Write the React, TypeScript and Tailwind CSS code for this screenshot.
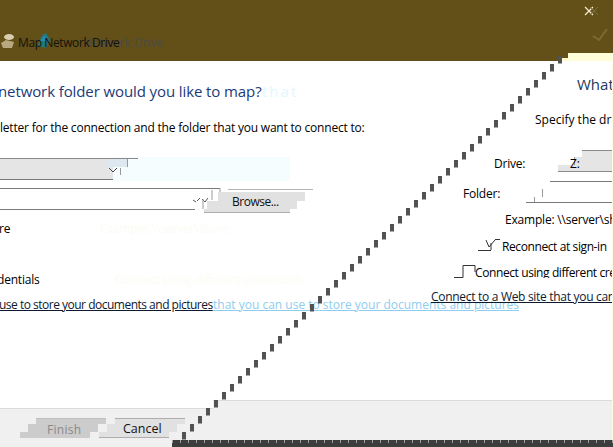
const font = "font-['Open_Sans','Noto_Sans',sans-serif]";

function Band({ cls }: { cls: string }) {
  return <div className={cls} />;
}

function Dashes() {
  const items = Array.from({ length: 48 }, (_, k) => k);
  return (
    <svg className="absolute left-0 top-0 pointer-events-none" width="613" height="447">
      {items.map((k) => (
        <rect key={k} x={182 + 8 * k} y={432 - 8 * k} width="4" height="7.5" fill="#525252" />
      ))}
    </svg>
  );
}

function Header() {
  return (
    <header className="relative h-[61px] shrink-0 bg-[#634f18] overflow-hidden">
      <svg className="absolute left-0 top-[32px]" width="60" height="18">
        <path d="M1 11 L6 8 L14 10 L12 16 L3 16 Z" fill="#b9a981" />
        <ellipse cx="9" cy="5" rx="5" ry="3" fill="#d9cdb0" />
        <path d="M38 14 Q40 3 46 1 L50 8 L46 16 Z" fill="#1d7a7a" />
        <path d="M40 9 L45 3 L47 9 Z" fill="#2f86b8" />
      </svg>
      <span className="absolute left-[83px] top-[34px] text-[12px] text-[#4a4c48]">Network Drive</span>
      <span className="absolute left-[18px] top-[34px] text-[12px] tracking-[-0.4px] text-[#15120a]">Map Network Drive</span>
      <svg className="absolute right-0 top-0" width="40" height="45">
        <path d="M12 7 L20 15 M20 7 L12 15" stroke="#f4eccf" strokeWidth="1.2" fill="none" />
        <path d="M17 7 L25 15 M25 7 L17 15" stroke="#7e6f45" strokeWidth="1" fill="none" />
        <path d="M20 36 L26 40 L34 29" stroke="#7a6a38" strokeWidth="2" fill="none" />
      </svg>
      <div className="absolute right-0 top-[53px] h-[8px] w-[45px] bg-[#fffcd8]" />
      <div className="absolute right-[45px] top-[58px] h-[3px] w-[8px] bg-[#fff8c8]" />
    </header>
  );
}

function LeftLayer() {
  return (
    <div className="col-start-1 row-start-1 flex flex-col min-w-0 text-[12px] tracking-[-0.2px]">
      <div className="mt-[20px] h-[20px] ml-[-2px] flex items-center whitespace-nowrap text-[15px] tracking-[-0.1px] text-[#1c3a78]">
        <span className="w-[264px] shrink-0">network folder would you like to map?</span>
        <span className="text-[#e2f8ff] tracking-[2px]">that</span>
      </div>
      <div className="mt-[19px] h-[16px] flex items-center whitespace-nowrap text-black">
        letter for the connection and the folder that you want to connect to:
      </div>
      <div className="mt-[22px] w-[290px] h-[24px] relative flex flex-col">
        <div className="h-[24px] w-[177px] ml-[113px] bg-[#f5fdff] absolute top-[-1px]" />
        <Band cls="relative h-[9px] w-[128px] bg-[linear-gradient(90deg,#e5e5e5_108px,#dde8f1_108px)] border-t border-[#8a8a8a]" />
        <Band cls="relative h-[13px] w-[113px] bg-[#e5e5e5] border-b border-[#7a7a7a]" />
        <svg className="absolute left-[108px] top-[0px]" width="30" height="24">
          <path d="M20 0.5 H30" stroke="#8a8a8a" fill="none" />
          <path d="M1 10 L5 14 L9 10" stroke="#444" fill="none" />
          <path d="M12.5 10 V17 M19.5 1 V9" stroke="#999" fill="none" />
        </svg>
      </div>
      <div className="mt-[6px] h-[24px] w-[320px] relative">
        <Band cls="h-[22px] w-[220px] bg-white border-t border-[#7a7a7a] border-b-0" />
        <Band cls="absolute left-0 top-[21px] w-[195px] h-[1px] bg-[#7a7a7a]" />
        <svg className="absolute left-[190px] top-[0px]" width="40" height="24">
          <path d="M3 12 L6 14 M7 13 L10 10 M12 11 L15 14 L18 10" stroke="#555" fill="none" />
          <path d="M13 11 V21 M22 2 V12 M30 0 V8" stroke="#999" fill="none" />
        </svg>
        <div className="absolute left-[204px] top-[1px] flex flex-col w-[110px]">
          <Band cls="ml-[24px] w-[85px] h-[1px] bg-[#b5b5b5]" />
          <Band cls="ml-[14px] w-[87px] h-[9px] mt-[2px] bg-[#e1e1e1]" />
          <Band cls="ml-[3px] w-[90px] h-[8px] bg-[#e1e1e1]" />
          <Band cls="ml-0 w-[86px] h-[4px] bg-[#e1e1e1] border-b border-[#adadad]" />
        </div>
        <span className="absolute left-[232px] top-[5px] text-[#111] tracking-[-0.5px]">Browse...</span>
      </div>
      <div className="mt-[10px] h-[14px] flex items-center ml-[-1px] whitespace-nowrap">
        <span className="w-[101px] shrink-0">re</span>
        <span className="text-[#fcfcf4]">Example: \\server\share</span>
      </div>
      <div className="mt-[37px] h-[14px] flex items-center ml-[-3px] whitespace-nowrap">
        <span className="w-[118px] shrink-0">dentials</span>
        <span className="text-[#fcfcf4]">Connect using different credentials</span>
      </div>
      <div className="mt-[10px] h-[15px] flex items-center whitespace-nowrap ml-[-1px]">
        <span className="underline text-[#0d1a30] w-[214px] shrink-0 tracking-[-0.5px]">use to store your documents and pictures</span>
        <span className="underline text-[#8fcdf0] tracking-normal">that you can use to store your documents and pictures</span>
      </div>
    </div>
  );
}

function RightLayer() {
  return (
    <div className="col-start-1 row-start-1 flex flex-col min-w-0 items-start text-[12px] tracking-[-0.2px]">
      <div className="mt-[13px] h-[20px] ml-[577px] whitespace-nowrap flex items-center text-[15px] tracking-normal text-[#26385e]">What</div>
      <div className="mt-[18px] h-[16px] ml-[535px] whitespace-nowrap flex items-center tracking-normal">Specify the drive</div>
      <div className="mt-[22px] h-[22px] w-[613px] relative">
        <span className="absolute left-[494px] top-[5px]">Drive:</span>
        <div className="absolute left-[558px] top-0 w-[55px] flex flex-col">
          <Band cls="ml-[24px] w-[31px] h-[7px] bg-[#e5e5e5] border-t border-[#8a8a8a]" />
          <Band cls="ml-[16px] w-[39px] h-[8px] bg-[#e5e5e5] border-l border-[#999]" />
          <Band cls="ml-0 w-[55px] h-[7px] bg-[#e5e5e5] border-b border-[#8a8a8a]" />
        </div>
        <span className="absolute left-[570px] top-[5px]">Z:</span>
      </div>
      <div className="mt-[9px] h-[22px] w-[613px] relative">
        <span className="absolute left-[463px] top-[4px]">Folder:</span>
        <div className="absolute left-[526px] top-0 w-[87px] flex flex-col">
          <Band cls="ml-[24px] w-[63px] h-[8px] border-t border-[#7a7a7a]" />
          <Band cls="ml-[16px] w-[71px] h-[8px] border-l border-[#999]" />
          <Band cls="ml-[8px] w-[79px] h-[5px] border-l border-[#999]" />
          <Band cls="ml-0 w-[87px] h-[1px] bg-[#7a7a7a]" />
        </div>
      </div>
      <div className="mt-[9px] h-[16px] ml-[505px] whitespace-nowrap flex items-center">{"Example: \\\\server\\share"}</div>
      <div className="mt-[11px] h-[12px] w-[613px] relative whitespace-nowrap">
        <svg className="absolute left-[478px] top-0" width="22" height="12">
          <path d="M0 11.5 H13 M13 4 V11 M17 0.5 H26 M8 1 L11 8 L17 1" stroke="#333" fill="none" />
        </svg>
        <span className="absolute left-[502px] top-[-1px] tracking-[-0.4px]">Reconnect at sign-in</span>
      </div>
      <div className="mt-[14px] h-[13px] w-[613px] relative whitespace-nowrap overflow-hidden">
        <svg className="absolute left-[454px] top-0" width="22" height="13">
          <path d="M0 12.5 H9 V0.5 H21 V7" stroke="#333" fill="none" />
        </svg>
        <span className="absolute left-[475px] top-[-1px] tracking-[-0.4px]">Connect using different credentials</span>
      </div>
      <div className="mt-[11px] h-[15px] ml-[431px] whitespace-nowrap flex items-center underline text-[#0d1a30] tracking-[-0.3px]">
        Connect to a Web site that you can use
      </div>
    </div>
  );
}

function Footer() {
  return (
    <footer className="relative h-[47px] shrink-0 bg-[#f0f0f0] border-t border-[#dcdcdc] flex flex-col">
      <div className="absolute left-0 top-[-1px] w-[213px] h-[9px] bg-white border-b border-[#dcdcdc]" />
      <div className="flex pt-[17px] pl-[20px] h-[39px] text-[12px]">
        <div className="relative w-[86px] flex flex-col">
          <Band cls="ml-[16px] w-[70px] h-[6px] bg-[#cccccc] border-t border-[#bfbfbf]" />
          <Band cls="ml-[8px] w-[70px] h-[8px] bg-[#cccccc]" />
          <Band cls="ml-0 w-[70px] h-[6px] bg-[#cccccc]" />
          <span className="absolute left-[27px] top-[3px] text-[#8a8a8a] tracking-[0.3px]">Finish</span>
        </div>
        <div className="relative w-[86px] ml-[-7px] flex flex-col">
          <Band cls="ml-[16px] w-[70px] h-[6px] bg-[#e1e1e1] border-t border-[#adadad]" />
          <Band cls="ml-[8px] w-[70px] h-[8px] bg-[#e1e1e1]" />
          <Band cls="ml-0 w-[70px] h-[6px] bg-[#e1e1e1] border-b border-[#adadad]" />
          <span className="absolute left-[24px] top-[2px] text-[#111] text-[12.5px]">Cancel</span>
        </div>
      </div>
      <div className="ml-[172px] h-[7px] flex flex-col">
        <div className="h-[3px] bg-[repeating-linear-gradient(90deg,#a0a0a0_0,#a0a0a0_1px,#3d3d3d_1px,#3d3d3d_8px)]" />
        <div className="h-[4px] bg-[#3d3d3d]" />
      </div>
    </footer>
  );
}

export default function App() {
  return (
    <div className={`relative h-[447px] w-[613px] overflow-hidden bg-white flex flex-col text-black ${font}`}>
      <Header />
      <main className="flex-1 grid grid-cols-1 overflow-hidden relative">
        <LeftLayer />
        <RightLayer />
      </main>
      <Footer />
      <div className="absolute right-0 top-[53px] h-[387px] w-[1px] bg-[#fffde0]" />
      <Dashes />
    </div>
  );
}
